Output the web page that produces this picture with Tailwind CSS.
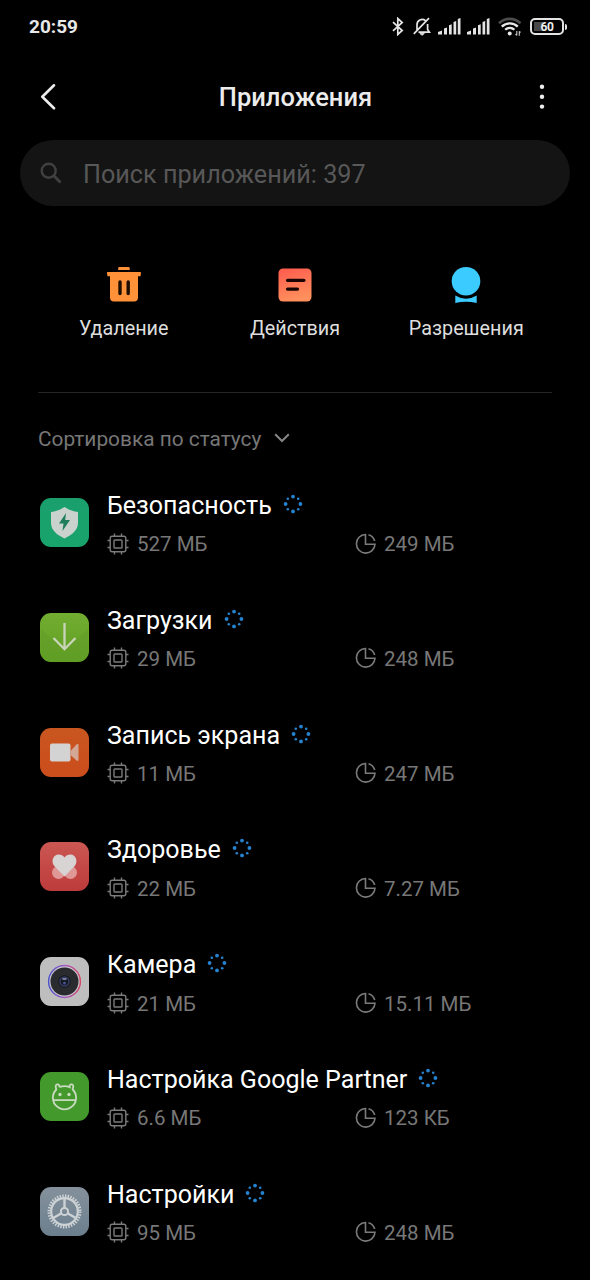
<!DOCTYPE html>
<html lang="ru">
<head>
<meta charset="utf-8">
<title>Приложения</title>
<script src="https://cdn.jsdelivr.net/npm/@tailwindcss/browser@4"></script>
</head>
<body class="bg-black">
<svg class="absolute w-0 h-0">
  <defs>
    <linearGradient id="gAct" x1="0" y1="0" x2="0.3" y2="1"><stop offset="0" stop-color="#ff5a4e"/><stop offset="1" stop-color="#ff8f5c"/></linearGradient>
    <linearGradient id="gSec" x1="0" y1="0" x2="0" y2="1"><stop offset="0" stop-color="#1a9f6c"/><stop offset="1" stop-color="#18a46c"/></linearGradient>
    <linearGradient id="gDown" x1="0" y1="0" x2="0" y2="1"><stop offset="0" stop-color="#72ad31"/><stop offset="1" stop-color="#5f9f22"/></linearGradient>
    <linearGradient id="gRec" x1="0" y1="0" x2="0" y2="1"><stop offset="0" stop-color="#c9561f"/><stop offset="1" stop-color="#cb4d1d"/></linearGradient>
    <linearGradient id="gHealth" x1="0" y1="0" x2="0" y2="1"><stop offset="0" stop-color="#cb5753"/><stop offset="1" stop-color="#bd3b3b"/></linearGradient>
    <linearGradient id="gSet" x1="0" y1="0" x2="0" y2="1"><stop offset="0" stop-color="#84919c"/><stop offset="1" stop-color="#6c7f8e"/></linearGradient>
    <linearGradient id="gRing" x1="0" y1="0" x2="1" y2="0"><stop offset="0" stop-color="#4a55c8"/><stop offset=".5" stop-color="#a05ac0"/><stop offset="1" stop-color="#cf4a63"/></linearGradient>
  </defs>
  <symbol id="chip" viewBox="0 0 22 22"><g fill="none" stroke="#7b7b7b" stroke-width="1.4"><rect x="3.2" y="3.2" width="15.6" height="15.6" rx="2"/><rect x="7" y="7" width="8" height="8" rx=".8"/><path d="M7.5 3V.5M14.5 3V.5M7.5 19v2.5M14.5 19v2.5M3 7.500H.5M3 14.500H.5M19 7.500h2.500M19 14.500h2.500"/></g></symbol>
  <symbol id="pie" viewBox="0 0 22 22"><g fill="none" stroke="#7b7b7b" stroke-width="1.600"><path d="M10.500 1.500A9.300 9.300 0 1 0 20 11.300H10.500Z"/><path d="M13.500 1.700A9 9 0 0 1 19.700 8"/></g></symbol>
  <symbol id="spin" viewBox="0 0 20 20"><g fill="#2583d0"><circle cx="10" cy="2.600" r="1.900"/><circle cx="10" cy="17.400" r="1.900"/><circle cx="2.600" cy="10" r="1.900"/><circle cx="17.400" cy="10" r="1.900"/><circle cx="4.800" cy="4.800" r="1.300"/><circle cx="15.200" cy="4.800" r="1.300"/><circle cx="4.800" cy="15.200" r="1.300"/><circle cx="15.200" cy="15.200" r="1.300"/></g></symbol>
  <symbol id="signal" viewBox="0 0 23 17"><path fill="#e4e4e4" d="M0 16.500v-2.500l4-1.500v4zM6 10.500l3-1v7H6zM11 7.200l2.700-1v10.300H11zM15.500 4l2.700-1v13.500h-2.700zM19.800 1l2.700-1v16.500h-2.700z"/></symbol>
</svg>

<div class="w-[590px] h-[1280px] bg-black overflow-hidden flex flex-col font-['Roboto','Noto_Sans',sans-serif] text-white">
  <div class="h-[53px] shrink-0 flex items-center justify-between pl-[29px] pr-[23px]">
    <span class="text-[19px] leading-none font-bold text-[#e8e8e8]">20:59</span>
    <div class="flex items-center">
      <svg class="w-[12px] h-[19px] mr-[9px]" viewBox="0 0 12 19" fill="none" stroke="#e4e4e4" stroke-width="1.700"><path d="M1 5.200l9.200 8.300L5.800 17.500V1.500l4.400 4L1 13.800"/></svg>
      <svg class="w-[18px] h-[19px] mr-[7px]" viewBox="0 0 18 19" fill="none" stroke="#e4e4e4" stroke-width="1.700"><path d="M4 13V8a5.200 5.200 0 0 1 8.500-4.300M14.600 7v5.500l1.800 2.700H5.500M.8 16.800L16 1.200"/><path d="M6.800 16.500h4.600l-2.300 1.800z" fill="#e4e4e4" stroke-width=".8"/></svg>
      <svg class="w-[23px] h-[17px] mr-[6px]"><use href="#signal"/></svg>
      <svg class="w-[23px] h-[17px] mr-[8px]"><use href="#signal"/></svg>
      <svg class="w-[24px] h-[20px] mr-[8px]" viewBox="0 0 24 20" fill="none"><path d="M1 6.200a15.500 15.500 0 0 1 21.500 0" stroke="#4c4c4c" stroke-width="2.600"/><path d="M3.800 9.600a11.300 11.300 0 0 1 16 0M7.200 12.800a6.500 6.500 0 0 1 9.200 0" stroke="#e8e8e8" stroke-width="2.300"/><circle cx="11.700" cy="16.500" r="2" fill="#e8e8e8"/><path d="M18.800 14v4.500M17.500 17l1.200 1.500M21.300 18.800v-4.500M22.500 15.500l-1.200-1.200" stroke="#ccc" stroke-width="1.100"/></svg>
      <div class="w-[34px] h-[17px] border-2 border-[#e4e4e4] rounded-[5px] p-[2px]"><div class="h-full flex items-center justify-center bg-linear-to-r from-[#484848] from-35% to-black to-35%"><span class="text-[12px] leading-none font-bold text-[#eee] tracking-[-0.3px]">60</span></div></div>
      <div class="w-[2px] h-[6px] bg-[#e4e4e4] rounded-r-sm ml-px"></div>
    </div>
  </div>

  <div class="h-[87px] shrink-0 flex items-center justify-between pl-[40px] pr-[44px]">
    <svg class="w-[16px] h-[26px]" viewBox="0 0 16 26" fill="none" stroke="#ededed" stroke-width="2.600" stroke-linecap="round" stroke-linejoin="round"><path d="M14 1.300L2.300 12.800 14 24.300"/></svg>
    <h1 class="text-[25.500px] leading-none font-medium text-[#ececec] mr-[3px] pt-[2px]">Приложения</h1>
    <svg class="w-[8px] h-[26px]" viewBox="0 0 8 26" fill="#ededed"><circle cx="4" cy="2.800" r="2.200"/><circle cx="4" cy="12.800" r="2.200"/><circle cx="4" cy="22.600" r="2.200"/></svg>
  </div>

  <div class="h-[66px] shrink-0 ml-[20px] w-[550px] rounded-full bg-[#141414] flex items-center pl-[20px]">
    <svg class="w-[22px] h-[22px] mr-[21px]" viewBox="0 0 22 22" fill="none" stroke="#404040" stroke-width="2.400"><circle cx="8.700" cy="8.700" r="7"/><path d="M13.800 13.800L20.500 20.500" stroke-width="2.800"/></svg>
    <span class="text-[25.200px] leading-none text-[#585858] pt-[3px]">Поиск приложений: 397</span>
  </div>

  <div class="h-[186px] shrink-0 grid grid-cols-3 pl-[38px] pr-[38px] pt-[58px] text-[19.800px] leading-[24px] text-[#dedede]">
    <div class="flex flex-col items-center">
      <svg class="w-[38px] h-[40px]" viewBox="0 0 38 40"><path fill="#ff9138" d="M14.500 3h9a1.200 1.200 0 0 1 1.200 1.200v1.900H13.200V4.200A1.200 1.200 0 0 1 14.500 3zM3 8h32c.8 0 1 .5.900 1.200l-.4 3.100H33v21.200a4 4 0 0 1-4 4H9a4 4 0 0 1-4-4V12.300H2.500L2 9.200C1.900 8.500 2.200 8 3 8z"/><path stroke="#1c0d02" stroke-width="3.400" stroke-linecap="round" d="M15 18v11.500M23.200 18v11.500"/></svg>
      <span class="mt-[13px]">Удаление</span>
    </div>
    <div class="flex flex-col items-center">
      <svg class="w-[38px] h-[40px]" viewBox="0 0 38 40"><rect x="2.500" y="4.500" width="33" height="33" rx="4.500" fill="url(#gAct)"/><path stroke="#180503" stroke-width="3.200" stroke-linecap="round" d="M11.500 16.300h16.500M11.500 25.100h10"/></svg>
      <span class="mt-[13px]">Действия</span>
    </div>
    <div class="flex flex-col items-center">
      <svg class="w-[38px] h-[40px]" viewBox="0 0 38 40" fill="#3bcbff"><circle cx="19" cy="17.200" r="14.300"/><path d="M8.300 31.500Q19 38 29.700 31.500V39Q19 36.500 8.300 39Z"/></svg>
      <span class="mt-[13px]">Разрешения</span>
    </div>
  </div>

  <div class="h-px shrink-0 mx-[38px] bg-[#262626]"></div>

  <div class="h-[72.500px] shrink-0 flex items-center pl-[38px] pt-[20px] text-[20.850px] text-[#777]">
    <span class="leading-none">Сортировка по статусу</span>
    <svg class="w-[16px] h-[10px] ml-[13px] -mt-[2px]" viewBox="0 0 16 10" fill="none" stroke="#858585" stroke-width="2"><path d="M1.200 1.200L8 8l6.800-6.800"/></svg>
  </div>

  <main id="list" class="flex flex-col"></main>
</div>

<template id="row">
  <div class="h-[114.830px] shrink-0 flex pl-[40px]">
    <svg class="icon w-[49px] h-[49px] mt-[32.500px] mr-[18px]" viewBox="0 0 49 49"></svg>
    <div class="flex-1 pt-[25px]">
      <div class="flex items-center h-[30px]">
        <span class="name text-[25.050px] leading-none whitespace-nowrap"></span>
        <svg class="w-[20px] h-[20px] ml-[11px] -mt-[3px]"><use href="#spin"/></svg>
      </div>
      <div class="flex items-center h-[24px] mt-[12px] text-[20.500px] leading-none text-[#777]">
        <div class="flex items-center w-[248.400px]"><svg class="w-[22px] h-[22px] mr-[8px] -mt-[2px]"><use href="#chip"/></svg><span class="mem"></span></div>
        <div class="flex items-center"><svg class="w-[22px] h-[22px] mr-[6.600px] -mt-[2px]"><use href="#pie"/></svg><span class="disk"></span></div>
      </div>
    </div>
  </div>
</template>

<script>
const tile = f => `<rect width="49" height="49" rx="11" fill="${f}"/>`;
const apps = [
  ['Безопасность', '527 МБ', '249 МБ', tile('url(#gSec)') + '<path fill="#c9d2cd" d="M24.500 9C28 11.500 33 13.500 38 14v11c0 7-6 12-13.500 15.500C17 37 11 32 11 25V14c5-.5 10-2.500 13.500-5z"/><path fill="#1f7d5c" d="M26 15l-7 10.500h4.500L22.500 33l7.500-11h-4.800z"/>'],
  ['Загрузки', '29 МБ', '248 МБ', tile('url(#gDown)') + '<path fill="#629c2b" opacity=".45" d="M1 16l23.500 21L48 16V38a11 11 0 0 1-11 11H12A11 11 0 0 1 1 38z"/><path fill="none" stroke="#c9d4bb" stroke-width="2.300" d="M24.500 10v26M13.500 25l11 11.200L35.500 25"/>'],
  ['Запись экрана', '11 МБ', '247 МБ', tile('url(#gRec)') + '<rect x="10" y="15.500" width="20.500" height="18" rx="2" fill="#d3d3d3"/><path fill="#d3a796" d="M30.500 23l6-6.500c1-.8 2-.5 2 .8v14.500c0 1.200-1 1.500-2 .7l-6-5.500z"/>'],
  ['Здоровье', '22 МБ', '7.27 МБ', tile('url(#gHealth)') + '<g fill="#df9896"><circle cx="18.500" cy="30.500" r="6.500"/><circle cx="30.500" cy="30.500" r="6.500"/></g><path fill="#d8d4d3" d="M24.500 34.500L14.500 24.200c-4-4.500-1.500-11.700 4.200-11.700 2.500 0 4.500 1.200 5.800 3 1.300-1.800 3.300-3 5.800-3 5.700 0 8.200 7.200 4.200 11.700z"/>'],
  ['Камера', '21 МБ', '15.11 МБ', tile('#bebebe') + '<circle cx="24.500" cy="24.500" r="17" fill="#cbc4ce"/><circle cx="24.500" cy="24.500" r="15.900" fill="none" stroke="url(#gRing)" stroke-width="1.500"/><circle cx="24.500" cy="24.500" r="14" fill="#292b2f"/><circle cx="24.500" cy="24.500" r="6.200" fill="#15161f"/><circle cx="24.500" cy="24.500" r="4.500" fill="none" stroke="#373d63" stroke-width="1.500"/><rect x="22.500" y="21" width="4" height="2" fill="#77809f"/><circle cx="24.500" cy="26" r="1.500" fill="#42538b"/>'],
  ['Настройка Google Partner', '6.6 МБ', '123 КБ', tile('#43992b') + '<g fill="none" stroke="#c8dabf" stroke-width="1.800"><path d="M19.300 15.200Q24.500 13 29.700 15.200C28.800 11.500 34 11.300 33.200 15 33.100 16 32.900 16.800 32.700 17.500A11.600 11.600 0 1 1 16.300 17.500C16.100 16.800 15.900 16 15.800 15 15 11.300 20.200 11.500 19.300 15.200M13.300 28.200h22.400"/></g><g fill="#c8dabf"><circle cx="20" cy="22.500" r="1.700"/><circle cx="29" cy="22.500" r="1.700"/></g>'],
  ['Настройки', '95 МБ', '248 МБ', tile('url(#gSet)') + '<g fill="none" stroke="#cdd2d5"><circle cx="24.500" cy="24.500" r="15.500" stroke-width="3" stroke-dasharray="1.450 1.255"/><circle cx="24.500" cy="24.500" r="13.300" stroke-width="2.200"/><circle cx="24.500" cy="24.500" r="3.600" stroke-width="2"/><path stroke-width="2.400" d="M24.500 21V11M27.500 26.300l8.700 5M21.500 26.300l-8.700 5"/></g>']
];
const list = document.getElementById('list'), tpl = document.getElementById('row');
for (const [name, mem, disk, icon] of apps) {
  const n = tpl.content.cloneNode(true);
  n.querySelector('.name').textContent = name;
  n.querySelector('.mem').textContent = mem;
  n.querySelector('.disk').textContent = disk;
  n.querySelector('.icon').innerHTML = icon;
  list.append(n);
}
</script>
</body>
</html>
